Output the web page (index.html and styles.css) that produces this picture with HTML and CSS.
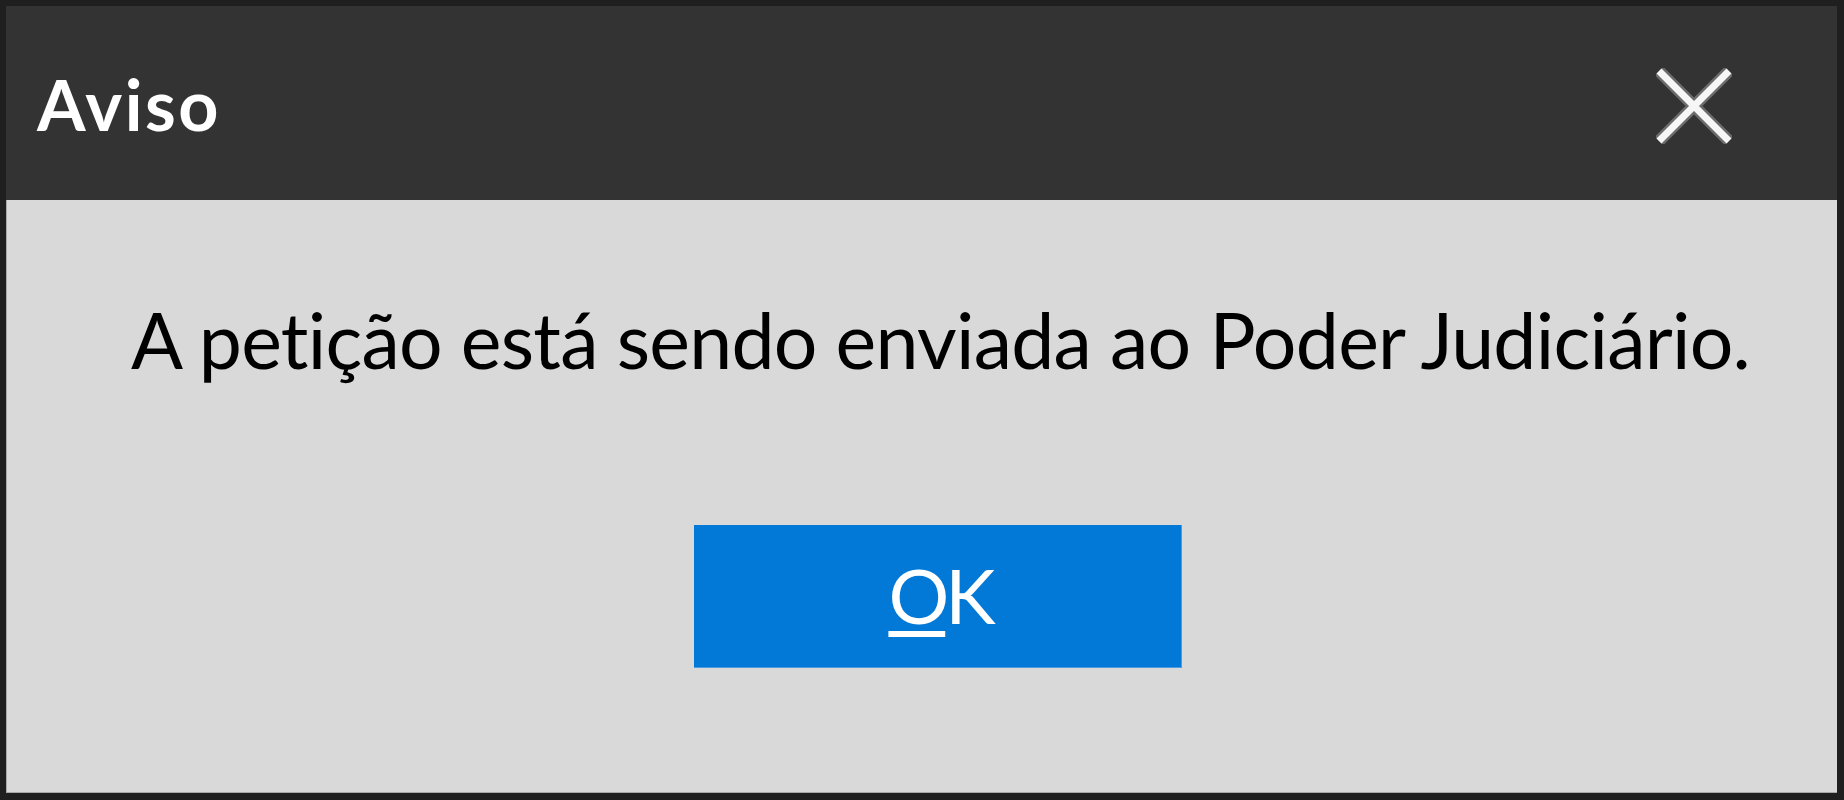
FILE: index.html
```html
<!DOCTYPE html>
<html lang="pt">
<head>
<meta charset="utf-8">
<title>Aviso</title>
<link rel="stylesheet" href="styles.css">
</head>
<body>
<div class="dialog">
  <header class="titlebar">
    <span class="title">Aviso</span>
    <span class="close" aria-label="Fechar">
      <svg width="76" height="76" viewBox="0 0 76 76">
        <path d="M3 3 L73 73 M73 3 L3 73" stroke="#6b6b6b" stroke-width="12" fill="none"/>
        <path d="M3 3 L73 73 M73 3 L3 73" stroke="#f6f6f6" stroke-width="7" fill="none"/>
      </svg>
    </span>
  </header>
  <main class="content">
    <p class="message">A petição está sendo enviada ao Poder Judiciário.</p>
    <button class="ok"><u>O</u>K</button>
  </main>
</div>
</body>
</html>
```

FILE: styles.css
```css
html, body {
  margin: 0;
  padding: 0;
  background: #1f1f1f;
}

.dialog {
  box-sizing: border-box;
  width: 1844px;
  height: 800px;
  border-style: solid;
  border-color: #1f1f1f;
  border-width: 6px 7px 7px 6px;
  display: flex;
  flex-direction: column;
  font-family: Lato, "Noto Sans", sans-serif;
}

.titlebar {
  height: 194px;
  flex: none;
  background: #333333;
  display: flex;
  align-items: center;
  justify-content: space-between;
  padding: 0 105px 0 31px;
}

.title {
  color: #ffffff;
  font-weight: 700;
  font-size: 70px;
  line-height: 1;
  letter-spacing: 2.5px;
  margin-top: 2px;
}

.close {
  display: flex;
  width: 76px;
  height: 76px;
  margin-top: 6px;
}

.content {
  flex: 1;
  background: #d9d9d9;
  box-shadow: inset 1px 0 0 #a8a8a8, inset 0 -1px 0 #a8a8a8;
  display: flex;
  flex-direction: column;
  align-items: flex-start;
  padding-left: 125px;
}

.message {
  margin: 89px 0 0 0;
  color: #000000;
  font-size: 77px;
  line-height: 100px;
  letter-spacing: -0.75px;
  white-space: nowrap;
}

.ok {
  margin-top: 136px;
  margin-left: 563px;
  width: 488px;
  height: 143px;
  border: none;
  box-shadow: inset -1px -1px 0 #4d9be0;
  background: #0278d7;
  color: #ffffff;
  font-family: Lato, "Noto Sans", sans-serif;
  font-size: 76px;
  letter-spacing: -4px;
  line-height: 1;
  padding: 0 0 4px 4px;
}

.ok u {
  text-decoration-thickness: 6px;
  text-underline-offset: 7px;
}
```
